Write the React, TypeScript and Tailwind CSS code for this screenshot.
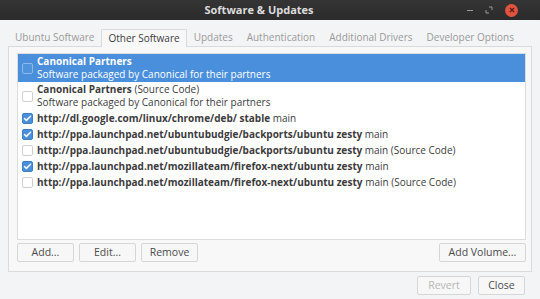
import { Check } from "lucide-react";

const tabs = [
  "Ubuntu Software",
  "Other Software",
  "Updates",
  "Authentication",
  "Additional Drivers",
  "Developer Options",
];

type Source = {
  bold: string;
  rest?: string;
  sub?: string;
  checked: boolean;
  selected?: boolean;
};

const sources: Source[] = [
  { bold: "Canonical Partners", sub: "Software packaged by Canonical for their partners", checked: false, selected: true },
  { bold: "Canonical Partners", rest: " (Source Code)", sub: "Software packaged by Canonical for their partners", checked: false },
  { bold: "http://dl.google.com/linux/chrome/deb/ stable", rest: " main", checked: true },
  { bold: "http://ppa.launchpad.net/ubuntubudgie/backports/ubuntu zesty", rest: " main", checked: true },
  { bold: "http://ppa.launchpad.net/ubuntubudgie/backports/ubuntu zesty", rest: " main (Source Code)", checked: false },
  { bold: "http://ppa.launchpad.net/mozillateam/firefox-next/ubuntu zesty", rest: " main", checked: true },
  { bold: "http://ppa.launchpad.net/mozillateam/firefox-next/ubuntu zesty", rest: " main (Source Code)", checked: false },
];

function Checkbox({ checked, onBlue }: { checked: boolean; onBlue?: boolean }) {
  if (checked) {
    return (
      <span className="flex h-[11px] w-[11px] shrink-0 items-center justify-center rounded-[2px] border border-[#3d7fc6] bg-[#4a90d9]">
        <Check className="h-[9px] w-[9px] text-white" strokeWidth={4} />
      </span>
    );
  }
  return (
    <span
      className={
        onBlue
          ? "h-[11px] w-[11px] shrink-0 rounded-[2px] border border-[#8fb9e8] bg-[#4f93dc]"
          : "h-[11px] w-[11px] shrink-0 rounded-[2px] border border-[#cfcfcf] bg-white"
      }
    />
  );
}

function Button({ label, disabled }: { label: string; disabled?: boolean }) {
  return (
    <button
      className={`flex h-[19px] w-full items-center justify-center rounded-[2px] border border-[#d6d6d6] bg-[#f7f7f7] text-[10.5px] leading-none whitespace-nowrap ${
        disabled ? "text-[#b6b6b6]" : "text-[#4c4c4c]"
      }`}
    >
      {label}
    </button>
  );
}

export default function App() {
  return (
    <div
      className="flex h-[299px] w-[540px] flex-col overflow-hidden bg-[#f3f4f5] text-[#3c3c3c]"
      style={{ fontFamily: '"Open Sans", "Noto Sans", sans-serif' }}
    >
      {/* Title bar */}
      <div className="flex h-[20px] shrink-0 items-center bg-gradient-to-b from-[#353535] to-[#2b2b2b]">
        <div className="flex-1" />
        <div className="text-[11px] font-bold text-[#dcdcdc]">Software &amp; Updates</div>
        <div className="flex flex-1 items-center justify-end gap-[12px] pr-[22px]">
          <span className="h-[1px] w-[6px] bg-[#9a9a9a]" />
          <svg width="8" height="8" viewBox="0 0 8 8" className="text-[#9a9a9a]">
            <path d="M4 1 L7 1 L7 4 M4 7 L1 7 L1 4" stroke="currentColor" strokeWidth="1" fill="none" />
          </svg>
          <span className="flex h-[13px] w-[13px] items-center justify-center rounded-full bg-[#e0543f]">
            <svg width="6" height="6" viewBox="0 0 6 6">
              <path d="M1 1 L5 5 M5 1 L1 5" stroke="#5a1c14" strokeWidth="1.3" />
            </svg>
          </span>
        </div>
      </div>

      {/* Tabs */}
      <div className="flex h-[26px] shrink-0 items-end pl-[8px]">
        {tabs.map((t) => (
          <div
            key={t}
            className={
              t === "Other Software"
                ? "relative -mb-px flex h-[18px] items-center whitespace-nowrap rounded-t-[2px] border border-b-0 border-[#d9d9d9] bg-[#f8f8f8] px-[6px] text-[10px] text-[#3c3c3c]"
                : "flex h-[18px] items-center whitespace-nowrap px-[7px] text-[10px] text-[#9a9a9a]"
            }
          >
            {t}
          </div>
        ))}
      </div>

      {/* Notebook page */}
      <div className="mx-[8px] flex h-[226px] shrink-0 flex-col border border-[#dadada] bg-[#f8f8f8] pl-[8px] pr-[5px] pt-[6px]">
        <div className="flex h-[187px] flex-col border border-[#dcdcdc] bg-white">
          {sources.map((s, i) => (
            <div
              key={i}
              className={`flex gap-[4px] pl-[4px] ${s.sub ? "h-[28px] items-start pt-[1px]" : "h-[16px] items-center"} ${
                s.selected ? "bg-[#4a8fdb] text-white" : ""
              }`}
            >
              <div className={s.sub ? "flex h-[26px] items-center" : "flex"}>
                <Checkbox checked={s.checked} onBlue={s.selected} />
              </div>
              <div className="flex flex-col text-[10px] leading-[13px]">
                <div className="whitespace-nowrap">
                  <span className="font-bold">{s.bold}</span>
                  {s.rest && <span>{s.rest}</span>}
                </div>
                {s.sub && <div className="whitespace-nowrap">{s.sub}</div>}
              </div>
            </div>
          ))}
        </div>
        <div className="mt-[3px] flex">
          <div className="w-[57px]">
            <Button label="Add..." />
          </div>
          <div className="ml-[5px] w-[57px]">
            <Button label="Edit..." />
          </div>
          <div className="ml-[5px] w-[57px]">
            <Button label="Remove" />
          </div>
          <div className="flex-1" />
          <div className="w-[87px]">
            <Button label="Add Volume..." />
          </div>
        </div>
      </div>

      {/* Dialog buttons */}
      <div className="flex justify-end gap-[7px] pr-[15px] pt-[4px]">
        <div className="w-[54px]">
          <Button label="Revert" disabled />
        </div>
        <div className="w-[47px]">
          <Button label="Close" />
        </div>
      </div>
    </div>
  );
}
